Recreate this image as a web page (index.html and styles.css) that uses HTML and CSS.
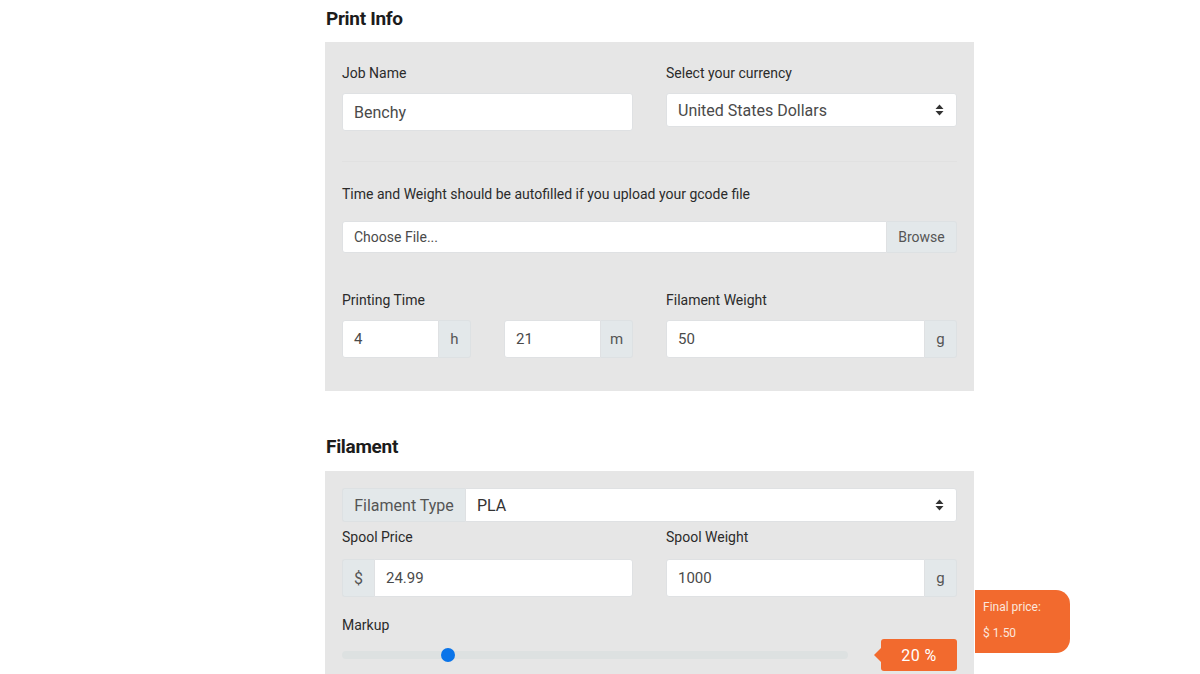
FILE: index.html
```html
<!DOCTYPE html>
<html>
<head>
<meta charset="utf-8">
<link rel="stylesheet" href="styles.css">
</head>
<body>
<main class="page">
  <h2 class="section-title first">Print Info</h2>
  <section class="panel">
    <div class="row two">
      <div class="field">
        <label class="lbl">Job Name</label>
        <div class="input tall">Benchy</div>
      </div>
      <div class="field">
        <label class="lbl">Select your currency</label>
        <div class="input select">United States Dollars<svg class="caret" width="9" height="12" viewBox="0 0 9 12"><path d="M4.5 0.5 L8.5 5 H0.5 Z M4.5 11.5 L8.5 7 H0.5 Z" fill="#333"/></svg></div>
      </div>
    </div>
    <div class="divider"></div>
    <p class="lbl note">Time and Weight should be autofilled if you upload your gcode file</p>
    <div class="group file">
      <div class="input grow small">Choose File...</div>
      <div class="addon browse">Browse</div>
    </div>
    <div class="row two time-row">
      <div class="field">
        <label class="lbl">Printing Time</label>
        <div class="row two">
          <div class="group">
            <div class="input grow tall num">4</div>
            <div class="addon">h</div>
          </div>
          <div class="group">
            <div class="input grow tall num">21</div>
            <div class="addon">m</div>
          </div>
        </div>
      </div>
      <div class="field">
        <label class="lbl">Filament Weight</label>
        <div class="group">
          <div class="input grow tall num">50</div>
          <div class="addon">g</div>
        </div>
      </div>
    </div>
  </section>

  <h2 class="section-title">Filament</h2>
  <section class="panel panel2">
    <div class="group type">
      <div class="addon label-addon">Filament Type</div>
      <div class="input grow select pla">PLA<svg class="caret" width="9" height="12" viewBox="0 0 9 12"><path d="M4.5 0.5 L8.5 5 H0.5 Z M4.5 11.5 L8.5 7 H0.5 Z" fill="#333"/></svg></div>
    </div>
    <div class="row two">
      <div class="field">
        <label class="lbl spool">Spool Price</label>
        <div class="group">
          <div class="addon dollar">$</div>
          <div class="input grow tall num">24.99</div>
        </div>
      </div>
      <div class="field">
        <label class="lbl spool">Spool Weight</label>
        <div class="group">
          <div class="input grow tall num">1000</div>
          <div class="addon">g</div>
        </div>
      </div>
    </div>
    <label class="lbl markup-lbl">Markup</label>
    <div class="slider-row">
      <div class="track"><span class="thumb"></span></div>
      <div class="badge">20 %</div>
    </div>
    <div class="final">
      <div>Final price:</div>
      <div class="final-val">$ 1.50</div>
    </div>
  </section>
</main>
</body>
</html>
```

FILE: styles.css
```css
* { box-sizing: border-box; }
html, body { margin: 0; background: #fff; }
body {
  font-family: Roboto, "Noto Sans", "Liberation Sans", sans-serif;
  color: #333;
  height: 674px;
  overflow: hidden;
}
.page {
  width: 649px;
  margin-left: 325px;
  padding-top: 7px;
}
.section-title {
  font-size: 19px;
  font-weight: 700;
  color: #1c1c1c;
  margin: 44px 0 12px 1px;
  line-height: 24px;
  letter-spacing: -0.3px;
}
.section-title.first { margin-top: 0; margin-bottom: 11px; }
.panel {
  background: #e6e6e6;
  padding: 21px 17px 33px 17px;
  position: relative;
}
.panel2 { padding-top: 17px; padding-bottom: 0; height: 203px; }
.row { display: flex; }
.row.two { gap: 33px; }
.row.two > * { flex: 1 1 0; min-width: 0; }
.field { display: flex; flex-direction: column; }
.lbl {
  display: block;
  font-size: 14px;
  line-height: 20px;
  color: #2b2b2b;
  margin-bottom: 10px;
}
.input {
  background: #fff;
  border: 1px solid #dfe1e3;
  border-radius: 3px;
  height: 34px;
  padding: 0 11px;
  display: flex;
  align-items: center;
  font-size: 16px;
  color: #4a4a4a;
}
.input.tall { height: 38px; }
.input.small { font-size: 14px; height: 32px; }
.input.num { font-size: 15px; }
.select { justify-content: space-between; padding-right: 12px; }
.caret { flex: none; }
.divider {
  height: 1px;
  background: #e1e1e1;
  margin-top: 30px;
}
.note { margin: 22px 0 17px; }
.group { display: flex; }
.grow { flex: 1 1 auto; min-width: 0; }
.group .input { border-radius: 3px 0 0 3px; }
.group .addon + .input { border-radius: 0 3px 3px 0; }
.addon {
  background: #e3e8ea;
  border: 1px solid #dde1e3;
  border-left: none;
  border-radius: 0 3px 3px 0;
  display: flex;
  align-items: center;
  justify-content: center;
  width: 32px;
  font-size: 15px;
  color: #555;
  flex: none;
}
.addon.browse { width: 70px; font-size: 14px; }
.time-row { margin-top: 37px; }
.time-row .lbl { margin-bottom: 10px; }
.type { height: 34px; }
.label-addon {
  width: 123px;
  border: 1px solid #dde1e3;
  border-right: none;
  border-radius: 3px 0 0 3px;
  font-size: 16px;
  color: #555;
}
.pla { height: 34px; border-radius: 0 3px 3px 0; color: #333; }
.dollar {
  border: 1px solid #dde1e3;
  border-right: none;
  border-radius: 3px 0 0 3px;
  font-size: 16px;
}
.lbl.spool { margin-top: 5px; margin-bottom: 12px; }
.markup-lbl { margin-top: 18px; margin-bottom: 4px; }
.slider-row {
  display: flex;
  align-items: center;
  justify-content: space-between;
}
.track {
  width: 506px;
  height: 8px;
  border-radius: 4px;
  background: #dde1e1;
  position: relative;
}
.thumb {
  position: absolute;
  left: 99px;
  top: -3px;
  width: 14px;
  height: 14px;
  border-radius: 50%;
  background: #0a74e9;
}
.badge {
  position: relative;
  width: 76px;
  height: 32px;
  background: #f26a2e;
  color: #fff;
  font-size: 16px;
  display: flex;
  align-items: center;
  justify-content: center;
  border-radius: 3px;
  letter-spacing: 0.5px;
}
.badge::before {
  content: "";
  position: absolute;
  left: -7px;
  top: 9px;
  border-top: 7px solid transparent;
  border-bottom: 7px solid transparent;
  border-right: 7px solid #f26a2e;
}
.final {
  position: absolute;
  left: 650px;
  top: 119px;
  width: 95px;
  height: 63px;
  background: #f26a2e;
  color: #fbe6dc;
  font-size: 12px;
  padding: 9px 8px;
  border-radius: 0 14px 14px 0;
  line-height: 16px;
}
.final-val { margin-top: 10px; }
```
